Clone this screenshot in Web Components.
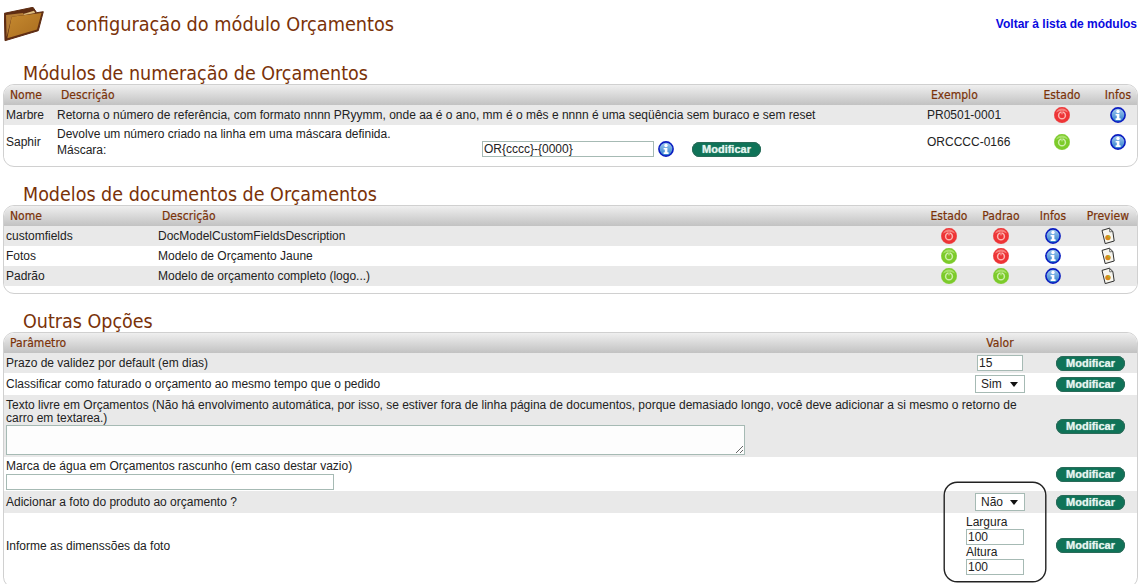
<!DOCTYPE html>
<html lang="pt"><head><meta charset="utf-8"><title>configuração do módulo Orçamentos</title>
<style>
html,body{margin:0;padding:0;height:584px;overflow:hidden;background:#fff}
body{font:12px/14px "Liberation Sans",Arial,sans-serif;color:#222}
</style></head><body>
<mod-page>
  <page-head slot="head" title-text="configuração do módulo Orçamentos" link="Voltar à lista de módulos"></page-head>

  <sec-title style="margin-top:14px">Módulos de numeração de Orçamentos</sec-title>
  <data-panel style="--cols:51px 870px 100px 74px 38px;height:83px">
    <data-row kind="head"><span>Nome</span><span>Descrição</span><span>Exemplo</span><span class="c">Estado</span><span class="c">Infos</span></data-row>
    <data-row kind="odd" style="--h:20px"><span>Marbre</span><span>Retorna o número de referência, com formato nnnn PRyymm, onde aa é o ano, mm é o mês e nnnn é uma seqüência sem buraco e sem reset</span><span>PR0501-0001</span><span class="c"><status-dot state="off"></status-dot></span><span class="c"><info-dot></info-dot></span></data-row>
    <data-row kind="even" style="--h:33px"><span>Saphir</span><mask-cell></mask-cell><span>ORCCCC-0166</span><span class="c"><status-dot state="on"></status-dot></span><span class="c"><info-dot></info-dot></span></data-row>
  </data-panel>

  <sec-title style="margin-top:16px">Modelos de documentos de Orçamentos</sec-title>
  <data-panel style="--cols:152px 767px 52px 52px 52px 58px;height:89px">
    <data-row kind="head"><span>Nome</span><span>Descrição</span><span class="c">Estado</span><span class="c">Padrao</span><span class="c">Infos</span><span class="c">Preview</span></data-row>
    <data-row kind="odd" style="--h:20px"><span>customfields</span><span>DocModelCustomFieldsDescription</span><span class="c"><status-dot state="off"></status-dot></span><span class="c"><status-dot state="off"></status-dot></span><span class="c"><info-dot></info-dot></span><span class="c"><doc-icon></doc-icon></span></data-row>
    <data-row kind="even" style="--h:20px"><span>Fotos</span><span>Modelo de Orçamento Jaune</span><span class="c"><status-dot state="on"></status-dot></span><span class="c"><status-dot state="off"></status-dot></span><span class="c"><info-dot></info-dot></span><span class="c"><doc-icon></doc-icon></span></data-row>
    <data-row kind="odd" style="--h:20px"><span>Padrão</span><span>Modelo de orçamento completo (logo...)</span><span class="c"><status-dot state="on"></status-dot></span><span class="c"><status-dot state="on"></status-dot></span><span class="c"><info-dot></info-dot></span><span class="c"><doc-icon></doc-icon></span></data-row>
  </data-panel>

  <sec-title style="margin-top:16px">Outras Opções</sec-title>
  <data-panel style="--cols:956px 80px 97px;height:256px">
    <data-row kind="head"><span>Parâmetro</span><span class="c">Valor</span><span></span></data-row>
    <data-row kind="odd" style="--h:20px"><span>Prazo de validez por default (em dias)</span><span class="c"><text-box value="15" style="--w:46px"></text-box></span><mod-button></mod-button></data-row>
    <data-row kind="even" style="--h:22px"><span>Classificar como faturado o orçamento ao mesmo tempo que o pedido</span><span class="c"><pick-box>Sim</pick-box></span><mod-button></mod-button></data-row>
    <data-row kind="odd" wide style="--h:62px"><long-cell style="--pt:4px">Texto livre em Orçamentos (Não há envolvimento automática, por isso, se estiver fora de linha página de documentos, porque demasiado longo, você deve adicionar a si mesmo o retorno de carro em textarea.)<area-box slot="field"></area-box></long-cell><mod-button></mod-button></data-row>
    <data-row kind="even" wide style="--h:34px"><long-cell style="--pt:3px">Marca de água em Orçamentos rascunho (em caso destar vazio)<text-box slot="field" style="--w:328px;--bh:16px;--top:1px"></text-box></long-cell><mod-button></mod-button></data-row>
    <data-row kind="odd" style="--h:22px"><span>Adicionar a foto do produto ao orçamento ?</span><span class="c"><pick-box>Não</pick-box></span><mod-button></mod-button></data-row>
    <data-row kind="even" style="--h:65px"><span>Informe as dimenssões da foto</span><size-cell></size-cell><mod-button></mod-button></data-row>
  </data-panel>
  <focus-ring></focus-ring>
</mod-page>

<script>
function def(name, css, html){
  customElements.define(name, class extends HTMLElement{
    constructor(){super();const r=this.attachShadow({mode:'open'});r.innerHTML='<style>'+css+'</style>'+html;}
  });
}
const HEAD='"DejaVu Sans","Noto Sans",sans-serif';
const TITLE=`font-family:${HEAD};font-stretch:condensed;font-weight:400;color:#7a3208;`;

def('mod-page',`:host{display:block;position:relative;width:1144px;height:584px;overflow:hidden}`,`<slot name="head"></slot><slot></slot>`);

customElements.define('page-head',class extends HTMLElement{
  connectedCallback(){
    const r=this.attachShadow({mode:'open'});
    r.innerHTML=`<style>
    :host{display:flex;align-items:flex-start;height:41px;padding-top:7px}
    svg{flex:none;margin-left:4px;width:42px;height:35px}
    h1{margin:7px 0 0 20px;flex:1;${TITLE}font-size:19.7px;line-height:22px}
    a{margin:10px 7px 0 0;font:700 12px/14px "Liberation Sans",sans-serif;color:#0a0ae0;text-decoration:none}
    </style>
    <svg viewBox="0 0 42 35"><defs><linearGradient id="f" x1="0" y1="0" x2="1" y2="1"><stop offset="0" stop-color="#c68a30"/><stop offset="1" stop-color="#a96c1e"/></linearGradient></defs>
    <path d="M.3 6.3 L29 .3 L32.7 5.7 L39.3 4.7 L34.3 23.7 L1 33.7 Z" fill="#5e2c12" stroke="#5e2c12" stroke-linejoin="round"/>
    <path d="M2 8 L19 6 L20 8 L7.7 9.7 L2.6 30 Z" fill="#b47c35"/>
    <path d="M19.3 7 L30 3.8 L31.2 6 L20.4 8 Z" fill="#dcbb7c"/>
    <path d="M7.7 9.7 L37.5 6 L33 22.6 L3.3 31.3 Z" fill="url(#f)"/>
    </svg>
    <h1>${this.getAttribute('title-text')}</h1><a href="#">${this.getAttribute('link')}</a>`;
  }
});

def('sec-title',`:host{display:block;height:22px;padding-left:23px;${TITLE}font-size:19.5px;line-height:24px}`,`<slot></slot>`);

def('data-panel',`:host{display:block;box-sizing:border-box;margin:0 6px 0 3px;border:1px solid #d0d0d0;border-radius:11px;overflow:hidden;background:#fff}`,`<slot></slot>`);

customElements.define('data-row',class extends HTMLElement{
  constructor(){super();
    const r=this.attachShadow({mode:'open'});
    r.innerHTML=`<style>
    :host{display:grid;grid-template-columns:var(--cols);height:var(--h,20px);align-items:center;font:12px/14px "Liberation Sans",sans-serif;color:#222}
    :host([kind=odd]){background:#e9e9e9}
    :host([kind=even]){background:#fff}
    :host([kind=head]){height:20px;background:linear-gradient(#efefef,#c2c2c2);${TITLE}font-size:12px;line-height:14px;-webkit-text-stroke:.2px #7a3208;letter-spacing:.05px}
    :host([wide]){grid-template-columns:1036px 97px}
    ::slotted(span){padding-left:2px;display:block;min-width:0}
    :host([kind=head]) ::slotted(span){padding-left:6px}
    ::slotted(span.c){padding:0;text-align:center;display:flex;justify-content:center;align-items:center}
    :host([kind=head]) ::slotted(span.c){padding:0}
    ::slotted(mod-button){justify-self:start;margin-left:16px}
    </style><slot></slot>`;
  }
});

customElements.define('status-dot',class extends HTMLElement{
  connectedCallback(){
    const on=this.getAttribute('state')==='on';
    const r=this.attachShadow({mode:'open'});
    const base=on?'#7ccb2a':'#ee3436', edge=on?'#8ed04a':'#e84a4a', hi=on?'#a8e06a':'#f6817c', pale=on?'#cdeeaa':'#fbb4b0';
    r.innerHTML=`<style>:host{display:inline-block;width:16px;height:16px;line-height:0}</style>
    <svg viewBox="0 0 16 16" width="16" height="16"><circle cx="8" cy="8" r="7.9" fill="${base}" stroke="${edge}" stroke-width=".3"/>
    <path d="M2 5.6 A6.5 6.5 0 0 1 14 5.6 Q8 1.8 2 5.6Z" fill="${hi}"/>
    <circle cx="8" cy="8.4" r="3.4" fill="none" stroke="${pale}" stroke-width="1.5"/>
    <path d="M8 4.4V7" stroke="${base}" stroke-width="1.6"/><path d="M8 5V7.4" stroke="${pale}" stroke-width="1"/></svg>`;
  }
});
def('info-dot',`:host{display:inline-block;width:16px;height:16px;line-height:0}`,
  `<svg viewBox="0 0 16 16" width="16" height="16"><defs><linearGradient id="b" x1="0" y1="0" x2="0" y2="1"><stop offset="0" stop-color="#a6cdf0"/><stop offset="1" stop-color="#2c7ccc"/></linearGradient></defs><circle cx="8" cy="8" r="7.1" fill="url(#b)" stroke="#0a1cc0" stroke-width="1.6"/><circle cx="8" cy="4.5" r="1.7" fill="#fff"/><path d="M5.6 7H9.4V11.2H10.6V13H5.6V11.2H6.8V8.6H5.6Z" fill="#fff"/></svg>`);
def('doc-icon',`:host{display:inline-block;width:14px;height:18px;line-height:0}`,
  `<svg viewBox="0 0 14 18" width="14" height="18"><path d="M1 3.4 L8.4 1.2 L11.8 4.4 L13.2 14 L4.2 16.6 Z" fill="#f6f5ee" stroke="#2e2e2e" stroke-width="1" stroke-linejoin="round"/><path d="M8.4 1.2 L8.8 5 L11.8 4.4" fill="none" stroke="#444" stroke-width=".7"/><circle cx="6.9" cy="10.6" r="2.7" fill="#d68a1c"/><path d="M7.1 8.4 A2.3 2.3 0 0 1 9.4 10.6 L7.1 10.6Z" fill="#aeb828"/></svg>`);

def('mod-button',`:host{display:inline-flex;align-items:center;justify-content:center;box-sizing:border-box;width:69px;height:15px;border-radius:8px;background:#0f7358;box-shadow:inset 0 0 0 1px #2a6a58;font:700 11px/13px "Liberation Sans",sans-serif;color:#e4f4ee;text-shadow:0 0 1px #bfe0d6}`,`Modificar`);

customElements.define('text-box',class extends HTMLElement{
  connectedCallback(){
    const r=this.attachShadow({mode:'open'});
    r.innerHTML=`<style>:host{display:block;margin-top:var(--top,0);line-height:0}
    input{box-sizing:border-box;display:block;width:var(--w,58px);height:var(--bh,16px);margin:0;padding:0 1px;border:1px solid #a6bab4;background:#fff;font:12px/14px "Liberation Sans",sans-serif;color:#222;outline:0;border-radius:0}</style>
    <input type="text" value="${this.getAttribute('value')||''}">`;
  }
});
def('area-box',`:host{display:block;line-height:0}
  textarea{box-sizing:border-box;display:block;width:739px;height:30px;margin:0;padding:1px;border:1px solid #a6bab4;background:#fdfdfd;font:12px "Liberation Sans",sans-serif;outline:0}`,`<textarea></textarea>`);
def('pick-box',`:host{display:inline-flex;align-items:center;box-sizing:border-box;width:50px;height:18px;border:1px solid #a6bab4;background:#fff;padding-left:5px;font:12px/14px "Liberation Sans",sans-serif;color:#222;position:relative}
  i{position:absolute;right:6px;top:6px;width:0;height:0;border:4px solid transparent;border-top:5.5px solid #111;border-bottom:0}`,`<slot></slot><i></i>`);

def('long-cell',`:host{display:block;align-self:start;box-sizing:border-box;padding:var(--pt,0) 2px 0;font:12px/13px "Liberation Sans",sans-serif;width:1020px}
  p{margin:0;line-height:13px}`,`<p><slot></slot></p><slot name="field"></slot>`);

def('mask-cell',`:host{display:block;padding-left:2px;font:12px/15px "Liberation Sans",sans-serif}
  .l2{display:flex;align-items:center;height:15px}
  .lb{width:425px;margin-top:2px}
  info-dot{margin:0 18px 0 4px}
  text-box{--w:172px}
  `,`<div>Devolve um número criado na linha em uma máscara definida.</div><div class="l2"><span class="lb">Máscara:</span><text-box value="OR{cccc}-{0000}"></text-box><info-dot></info-dot><mod-button></mod-button></div>`);

def('size-cell',`:host{display:block;align-self:start;padding:2px 0 0 6px;font:12px/14px "Liberation Sans",sans-serif}
  .t{display:block;height:14px;line-height:14px}
  `,`<span class="t">Largura</span><text-box value="100"></text-box><span class="t">Altura</span><text-box value="100"></text-box>`);

def('focus-ring',`:host{position:absolute;left:943px;top:481px;width:104px;height:102px;line-height:0;pointer-events:none}`,
 `<svg width="104" height="102" viewBox="0 0 104 102"><rect x="1.2" y="1.2" width="101.6" height="99.6" rx="13" fill="none" stroke="#222" stroke-width="1.4"/></svg>`);
</script>
</body></html>
